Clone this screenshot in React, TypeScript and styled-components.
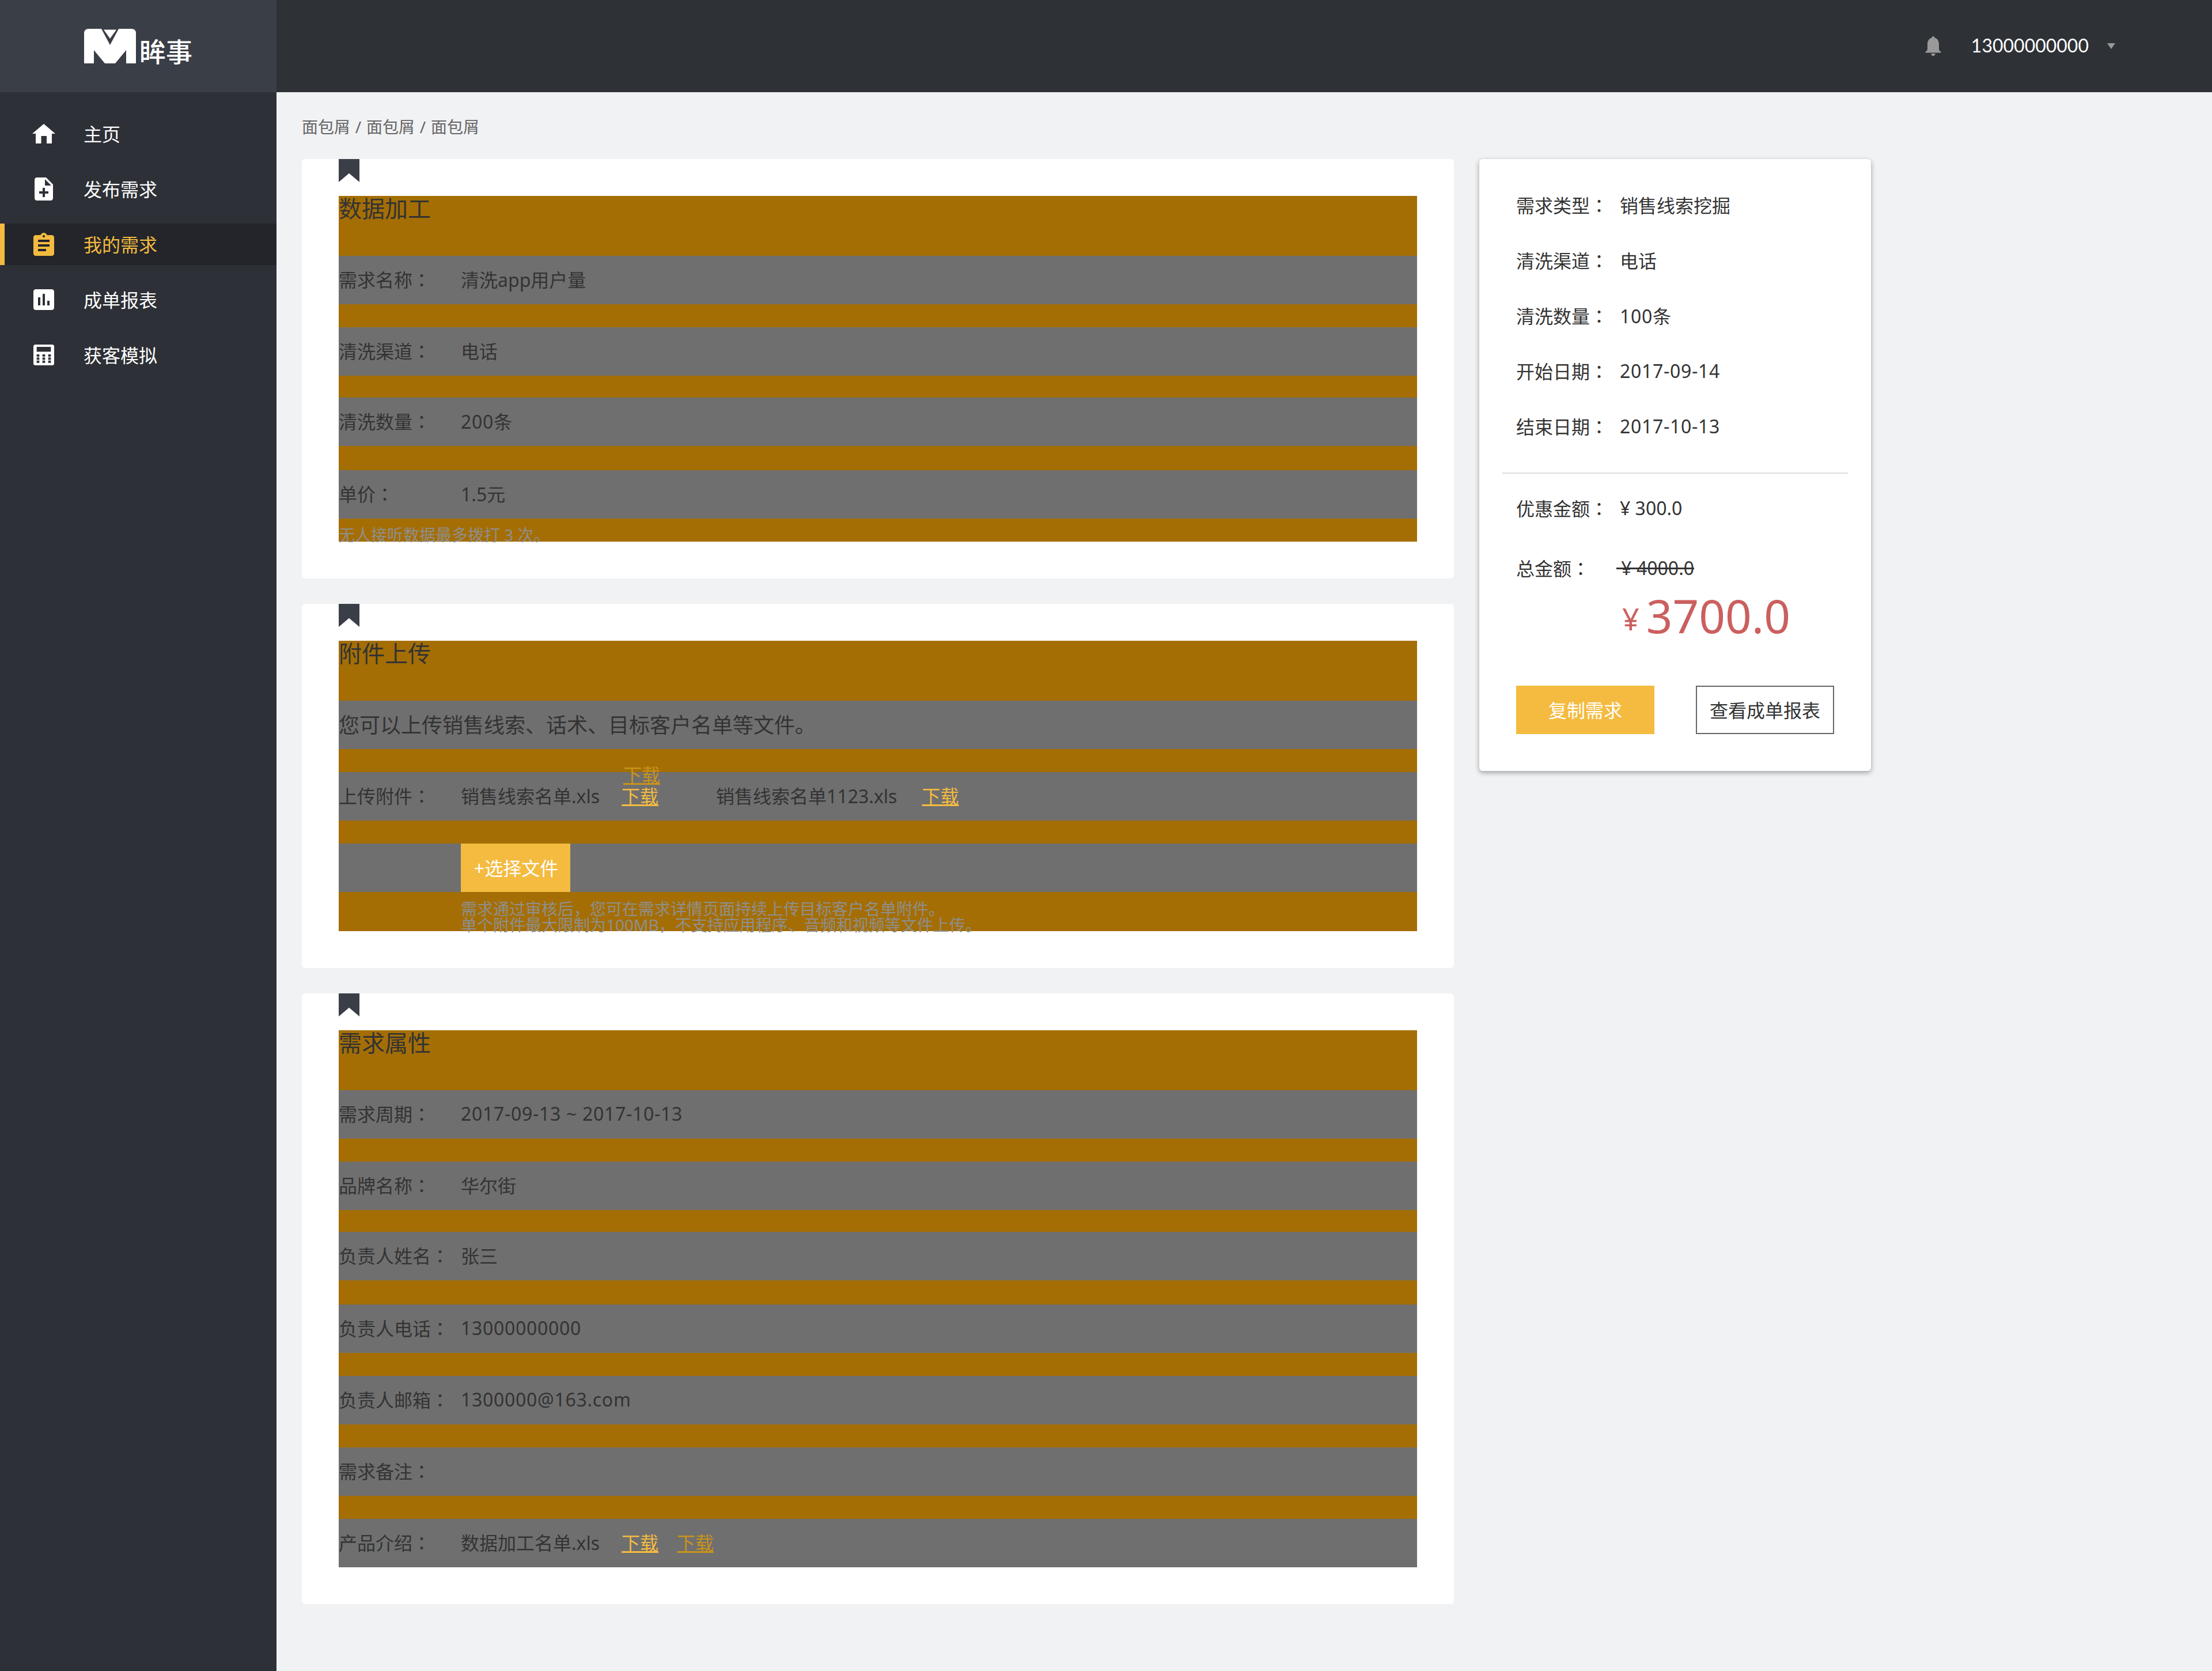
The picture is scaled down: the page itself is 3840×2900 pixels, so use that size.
import React from "react";
import styled, { createGlobalStyle } from "styled-components";

const Global = createGlobalStyle`
  html, body { margin: 0; padding: 0; background: #f1f2f4; }
  body { font-family: "Noto Sans", "Noto Sans CJK SC", sans-serif; font-size: 32px; color: #333; }
  * { box-sizing: border-box; }
`;

const Page = styled.div`
  display: grid;
  grid-template-columns: 480px 3360px;
  width: 3840px;
  height: 2900px;
  overflow: hidden;
  background: #f1f2f4;
`;
const Sidebar = styled.aside`
  background: #2d3036;
  display: flex;
  flex-direction: column;
`;
const LogoBar = styled.div`
  height: 160px;
  background: #3a3e47;
  display: flex;
  justify-content: center;
  align-items: flex-end;
  padding-bottom: 50px;
  gap: 6px;
`;
const LogoText = styled.span`
  color: #fff;
  font-size: 46px;
  line-height: 42px;
  font-weight: 500;
  white-space: nowrap;
`;
const Nav = styled.nav`
  display: flex;
  flex-direction: column;
  gap: 24px;
  padding-top: 36px;
`;
const NavItem = styled.a<{ $active?: boolean }>`
  height: 72px;
  display: flex;
  align-items: center;
  padding-left: 52px;
  gap: 45px;
  font-size: 32px;
  color: ${(p) => (p.$active ? "#f4bb40" : "#fff")};
  background: ${(p) => (p.$active ? "#23252a" : "transparent")};
  box-shadow: ${(p) => (p.$active ? "inset 8px 0 0 #f4bb40" : "none")};
`;
const NavLabel = styled.span`
  margin-bottom: 2px;
`;
const Main = styled.main`
  display: flex;
  flex-direction: column;
`;
const TopBar = styled.header`
  height: 160px;
  flex: none;
  background: #2e3136;
  display: flex;
  justify-content: flex-end;
  align-items: center;
  padding-right: 168px;
`;
const Phone = styled.span`
  font-family: Lato, sans-serif;
  color: #fff;
  font-size: 32px;
  margin: 0 32px 3px 52px;
`;
const Content = styled.div`
  padding: 0 44px;
`;
const Crumb = styled.div`
  height: 116px;
  padding-top: 40px;
  font-size: 28px;
  line-height: 40px;
  word-spacing: 1.5px;
  color: #666;
`;
const Columns = styled.div`
  display: flex;
  gap: 44px;
  align-items: flex-start;
`;
const Left = styled.div`
  width: 2000px;
  display: flex;
  flex-direction: column;
  gap: 44px;
`;
const Card = styled.section`
  background: #fff;
  border-radius: 6px;
  padding: 0 64px 64px;
`;
const Bookmark = styled.div`
  width: 36px;
  height: 40px;
  margin-bottom: 24px;
  background: #3a3e47;
  clip-path: polygon(0 0, 100% 0, 100% 100%, 50% 62%, 0 100%);
`;
const Block = styled.div`
  background: #a46e05;
  position: relative;
`;
const Title = styled.h2`
  margin: 0;
  height: 104px;
  font-size: 40px;
  line-height: 44px;
  font-weight: 400;
  color: #333;
`;
const Row = styled.div<{ $gap?: number }>`
  height: 84px;
  margin-top: ${(p) => p.$gap ?? 0}px;
  padding-bottom: 4px;
  background: #6f6f6f;
  display: flex;
  align-items: center;
  font-size: 32px;
  color: #333;
  white-space: nowrap;
  position: relative;
`;
const Label = styled.span`
  width: 212px;
  flex: none;
`;
const Colon = styled.span`
  font-family: "Noto Sans CJK TC", sans-serif;
`;
const Value = styled.span<{ $spaced?: boolean }>`
  letter-spacing: ${(p) => (p.$spaced ? "0.7px" : "normal")};
`;
const Lead = styled.span`
  font-size: 36px;
`;
const FileName = styled.span<{ $after: number }>`
  margin-right: ${(p) => p.$after}px;
`;
const DownLink = styled.a<{ $dim?: boolean; $after?: number }>`
  color: ${(p) => (p.$dim ? "#c8931a" : "#f4bb40")};
  text-decoration: underline;
  margin-right: ${(p) => p.$after ?? 0}px;
`;
const GhostLink = styled(DownLink)`
  position: absolute;
  left: 494px;
  top: -20px;
  margin: 0;
`;
const Hint = styled.div<{ $h: number; $pt: number; $left?: number }>`
  height: ${(p) => p.$h}px;
  padding-top: ${(p) => p.$pt}px;
  padding-left: ${(p) => p.$left ?? 0}px;
  font-size: 28px;
  line-height: 28px;
  color: #8f8f8f;
  white-space: nowrap;
`;
const PickButton = styled.button`
  align-self: flex-start;
  margin-left: 212px;
  width: 190px;
  height: 84px;
  border: 0;
  border-radius: 0;
  padding: 0 0 2px 2px;
  background: #f4bb40;
  color: #fff;
  font: inherit;
  font-size: 32px;
`;
const Panel = styled.aside`
  width: 680px;
  background: #fff;
  border-radius: 6px;
  box-shadow: 0 3px 8px rgba(0, 0, 0, 0.35);
  padding: 33px 64px 64px;
`;
const PanelRow = styled.div`
  height: 96px;
  padding-bottom: 4px;
  display: flex;
  align-items: center;
  font-size: 32px;
  color: #333;
  white-space: nowrap;
`;
const PanelLabel = styled.span`
  width: 180px;
  flex: none;
`;
const Divider = styled.hr`
  border: 0;
  height: 2px;
  background: #ddd;
  margin: 31px -24px 13px;
`;
const TotalRow = styled(PanelRow)`
  margin-top: 8px;
`;
const OldPrice = styled.span`
  margin-left: -6px;
  text-decoration: line-through;
`;
const Price = styled.div`
  height: 72px;
  margin-top: -3px;
  padding-left: 184px;
  display: flex;
  align-items: center;
  color: #cb5f5f;
  font-size: 80px;
  line-height: 72px;
  white-space: nowrap;
`;
const PriceUnit = styled.span`
  font-size: 52px;
  margin-right: 12px;
  position: relative;
  top: 6px;
`;
const Buttons = styled.div`
  margin-top: 86px;
  display: flex;
  gap: 72px;
`;
const ActionButton = styled.button<{ $primary?: boolean }>`
  width: 240px;
  height: 84px;
  padding: 0 0 3px;
  border-radius: 0;
  font: inherit;
  font-size: 32px;
  background: ${(p) => (p.$primary ? "#f4bb40" : "#fff")};
  color: ${(p) => (p.$primary ? "#fff" : "#333")};
  border: ${(p) => (p.$primary ? "0" : "2px solid #666")};
`;

const Svg = styled.svg`
  display: block;
  flex: none;
`;

const Logo = () => (
  <Svg width="90" height="60" viewBox="0 0 90 60">
    <path fill="#fff" d="M8 0H82Q90 0 90 8V60H0V8Q0 0 8 0Z" />
    <path fill="#3a3e47" d="M30 0L45 28L60 0Z" />
    <path fill="#fff" d="M34 1.5H56L45 17Z" />
    <path fill="#3a3e47" d="M17 37L36 60H17ZM73 37L54 60H73Z" />
  </Svg>
);
const HomeIcon = () => (
  <Svg width="48" height="48" viewBox="-4 -7 48 48" fill="#fff">
    <path d="M20 0L40 17H34V34H25V21H15.5V34H6V17H0Z" />
  </Svg>
);
const FileIcon = () => (
  <Svg width="48" height="48" viewBox="0 0 24 24" fill="#fff">
    <path d="M14 2H6c-1.1 0-2 .9-2 2v16c0 1.1.9 2 2 2h12c1.1 0 2-.9 2-2V8l-6-6zm2 14h-3v3h-2v-3H8v-2h3v-3h2v3h3v2zm-3-7V3.5L18.5 9H13z" />
  </Svg>
);
const ClipIcon = () => (
  <Svg width="48" height="48" viewBox="0 -1 24 24" fill="#f4bb40">
    <path d="M19 3h-4.18C14.4 1.84 13.3 1 12 1c-1.3 0-2.4.84-2.82 2H5c-1.1 0-2 .9-2 2v14c0 1.1.9 2 2 2h14c1.1 0 2-.9 2-2V5c0-1.1-.9-2-2-2zm-7 0c.55 0 1 .45 1 1s-.45 1-1 1-1-.45-1-1 .45-1 1-1zm2 14H7v-2h7v2zm3-4H7v-2h10v2zm0-4H7V7h10v2z" />
  </Svg>
);
const ChartIcon = () => (
  <Svg width="48" height="48" viewBox="0 0 24 24" fill="#fff">
    <path d="M19 3H5c-1.1 0-2 .9-2 2v14c0 1.1.9 2 2 2h14c1.1 0 2-.9 2-2V5c0-1.1-.9-2-2-2zM9 17H7v-7h2v7zm4 0h-2V7h2v10zm4 0h-2v-4h2v4z" />
  </Svg>
);
const CalcIcon = () => (
  <Svg width="48" height="48" viewBox="-6 -6 48 48">
    <rect width="36" height="36" rx="3.5" fill="#fff" />
    <rect x="5.7" y="4" width="24.6" height="8.4" fill="#2d3036" />
    {[17, 22.4, 27.8].map((y) =>
      [5.7, 15.7, 25.7].map((x) => (
        <rect key={`${x}-${y}`} x={x} y={y} width="4.6" height="4" fill="#2d3036" />
      ))
    )}
  </Svg>
);
const BellIcon = () => (
  <Svg width="28" height="34" viewBox="0 0 28 34" fill="#999">
    <path d="M14 0c1.5 0 2.5 1 2.5 2.6C21.500 4 24 8.500 24 14v8.500c0 1.500 1.500 3 3.500 4.500v1.500H.5V27c2-1.500 3.500-3 3.500-4.500V14c0-5.500 2.500-10 7.500-11.400C11.500 1 12.500 0 14 0z" />
    <path d="M10.500 30h7c0 2.500-1.500 4-3.500 4s-3.500-1.500-3.500-4z" />
  </Svg>
);
const CaretIcon = () => (
  <Svg width="14" height="10" viewBox="0 0 14 10" fill="#999">
    <path d="M0 0H14L7 10Z" />
  </Svg>
);

const Lab = ({ text }: { text: string }) => (
  <Label>
    {text}
    <Colon>：</Colon>
  </Label>
);
const PLab = ({ text }: { text: string }) => (
  <PanelLabel>
    {text}
    <Colon>：</Colon>
  </PanelLabel>
);

const navItems = [
  { label: "主页", icon: <HomeIcon /> },
  { label: "发布需求", icon: <FileIcon /> },
  { label: "我的需求", icon: <ClipIcon />, active: true },
  { label: "成单报表", icon: <ChartIcon /> },
  { label: "获客模拟", icon: <CalcIcon /> },
];
const attrs = [
  { label: "需求周期", value: "2017-09-13 ~ 2017-10-13", gap: 0, spaced: true },
  { label: "品牌名称", value: "华尔街", gap: 40 },
  { label: "负责人姓名", value: "张三", gap: 38 },
  { label: "负责人电话", value: "13000000000", gap: 42, spaced: true },
  { label: "负责人邮箱", value: "1300000@163.com", gap: 40, spaced: true },
  { label: "需求备注", value: "", gap: 40 },
];
const summary = [
  { label: "需求类型", value: "销售线索挖掘" },
  { label: "清洗渠道", value: "电话" },
  { label: "清洗数量", value: "100条", spaced: true },
  { label: "开始日期", value: "2017-09-14", spaced: true },
  { label: "结束日期", value: "2017-10-13", spaced: true },
];

export default function App() {
  return (
    <>
      <Global />
      <Page>
        <Sidebar>
          <LogoBar>
            <Logo />
            <LogoText>眸事</LogoText>
          </LogoBar>
          <Nav>
            {navItems.map((n) => (
              <NavItem key={n.label} $active={n.active}>
                {n.icon}
                <NavLabel>{n.label}</NavLabel>
              </NavItem>
            ))}
          </Nav>
        </Sidebar>
        <Main>
          <TopBar>
            <BellIcon />
            <Phone>13000000000</Phone>
            <CaretIcon />
          </TopBar>
          <Content>
            <Crumb>面包屑 / 面包屑 / 面包屑</Crumb>
            <Columns>
              <Left>
                <Card>
                  <Bookmark />
                  <Block>
                    <Title>数据加工</Title>
                    <Row>
                      <Lab text="需求名称" />
                      <Value>清洗app用户量</Value>
                    </Row>
                    <Row $gap={40}>
                      <Lab text="清洗渠道" />
                      <Value>电话</Value>
                    </Row>
                    <Row $gap={38}>
                      <Lab text="清洗数量" />
                      <Value $spaced>200条</Value>
                    </Row>
                    <Row $gap={42}>
                      <Lab text="单价" />
                      <Value>1.5元</Value>
                    </Row>
                    <Hint $h={40} $pt={14}>无人接听数据最多拨打 3 次。</Hint>
                  </Block>
                </Card>
                <Card>
                  <Bookmark />
                  <Block>
                    <Title>附件上传</Title>
                    <Row>
                      <Lead>您可以上传销售线索、话术、目标客户名单等文件。</Lead>
                    </Row>
                    <Row $gap={40}>
                      <Lab text="上传附件" />
                      <FileName $after={38}>销售线索名单.xls</FileName>
                      <DownLink $after={100}>下载</DownLink>
                      <FileName $after={43}>销售线索名单1123.xls</FileName>
                      <DownLink>下载</DownLink>
                      <GhostLink $dim>下载</GhostLink>
                    </Row>
                    <Row $gap={40}>
                      <PickButton>+选择文件</PickButton>
                    </Row>
                    <Hint $h={68} $pt={15} $left={212}>
                      需求通过审核后，您可在需求详情页面持续上传目标客户名单附件。
                      <br />
                      单个附件最大限制为100MB，不支持应用程序、音频和视频等文件上传。
                    </Hint>
                  </Block>
                </Card>
                <Card>
                  <Bookmark />
                  <Block>
                    <Title>需求属性</Title>
                    {attrs.map((a) => (
                      <Row key={a.label} $gap={a.gap}>
                        <Lab text={a.label} />
                        <Value $spaced={a.spaced}>{a.value}</Value>
                      </Row>
                    ))}
                    <Row $gap={40}>
                      <Lab text="产品介绍" />
                      <FileName $after={38}>数据加工名单.xls</FileName>
                      <DownLink $after={32}>下载</DownLink>
                      <DownLink $dim>下载</DownLink>
                    </Row>
                  </Block>
                </Card>
              </Left>
              <Panel>
                {summary.map((s) => (
                  <PanelRow key={s.label}>
                    <PLab text={s.label} />
                    <Value $spaced={s.spaced}>{s.value}</Value>
                  </PanelRow>
                ))}
                <Divider />
                <PanelRow>
                  <PLab text="优惠金额" />
                  <Value>¥ 300.0</Value>
                </PanelRow>
                <TotalRow>
                  <PLab text="总金额" />
                  <OldPrice>{"\u00a0¥ 4000.0"}</OldPrice>
                </TotalRow>
                <Price>
                  <PriceUnit>¥</PriceUnit>
                  <span>3700.0</span>
                </Price>
                <Buttons>
                  <ActionButton $primary>复制需求</ActionButton>
                  <ActionButton>查看成单报表</ActionButton>
                </Buttons>
              </Panel>
            </Columns>
          </Content>
        </Main>
      </Page>
    </>
  );
}
